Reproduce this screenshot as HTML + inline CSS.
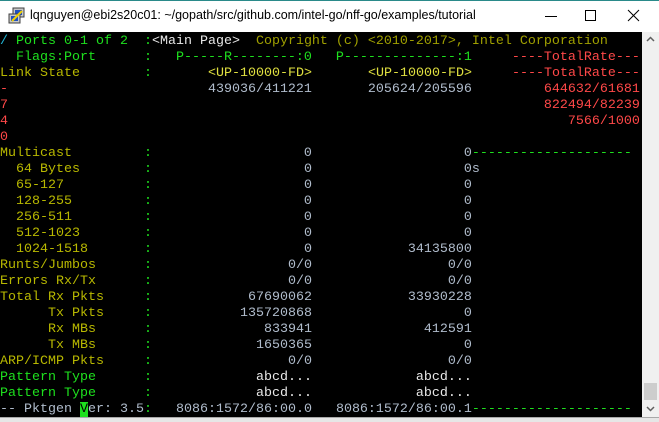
<!DOCTYPE html>
<html><head><style>
*{margin:0;padding:0}
body{width:659px;height:421px;overflow:hidden;background:#fff;position:relative;font-family:"Liberation Sans",sans-serif}
#tb{position:absolute;left:0;top:0;width:659px;height:32px;background:#fff;border-top:1px solid #2a8a8a;box-sizing:border-box}
#title{position:absolute;left:30px;top:7px;font-size:12.5px;color:#000;white-space:nowrap}
#term{position:absolute;left:0;top:32px;width:642px;height:385px;background:#000;overflow:hidden}
#in{position:absolute;left:0;top:2px;width:642px;height:385px}
.r{position:absolute;left:0;height:16px;line-height:16px;white-space:pre;font-family:"Liberation Mono",monospace;font-size:13.333px;color:#c0c0c0}
.g{color:#1ee01e}.o{color:#b8b800}.d{color:#a0a000}.w{color:#e8e8e8}.n{color:#b0bccc}.rd{color:#ff4848}.c{color:#22b8d8}.y{color:#e0e040}
#sb{position:absolute;left:642px;top:32px;width:17px;height:385px;background:#f0f0f0}
#thumb{position:absolute;left:2px;top:351px;width:13px;height:17px;background:#cdcdcd}
#bot{position:absolute;left:0;top:417px;width:659px;height:4px;background:#e6e6e6;border-top:1px solid #a8a8a8}
</style></head><body>
<div id="tb">
<svg style="position:absolute;left:8px;top:6px" width="18" height="18" viewBox="0 0 18 18"><rect x="5" y="1" width="11" height="9" fill="#c8c8c8" stroke="#404040"/><rect x="7" y="3" width="7" height="5" fill="#2050c0"/><rect x="1" y="7" width="11" height="9" fill="#c8c8c8" stroke="#404040"/><rect x="3" y="9" width="7" height="5" fill="#2050c0"/><path d="M4 14 L14 4" stroke="#f0d000" stroke-width="2"/></svg>
<div id="title">lqnguyen@ebi2s20c01: ~/gopath/src/github.com/intel-go/nff-go/examples/tutorial</div>
<svg style="position:absolute;left:544px;top:8px" width="14" height="14"><path d="M1 7.5H13" stroke="#000"/></svg>
<svg style="position:absolute;left:584px;top:8px" width="14" height="14"><rect x="1.5" y="1.5" width="10" height="10" fill="none" stroke="#000"/></svg>
<svg style="position:absolute;left:627px;top:8px" width="14" height="14"><path d="M1 1L12 12M12 1L1 12" stroke="#000"/></svg>
</div>
<div id="term"><div id="in">
<div class="r" style="top:0"><span class="c">/</span><span class="g"> Ports 0-1 of 2  :</span><span class="w">&lt;Main Page&gt;</span><span class="d">  Copyright (c) &lt;2010-2017&gt;, Intel Corporation</span></div>
<div class="r g" style="top:16px">  Flags:Port      :   P-----R--------:0   P--------------:1     <span class="rd">----TotalRate---</span></div>
<div class="r" style="top:32px"><span class="o">Link State</span>        <span class="g">:</span>       <span class="y">&lt;UP-10000-FD&gt;</span>       <span class="y">&lt;UP-10000-FD&gt;</span>     <span class="rd">----TotalRate---</span></div>
<div class="r n" style="top:48px"><span class="rd">-</span>                         439036/411221       205624/205596         <span class="rd">644632/61681</span></div>
<div class="r n" style="top:64px"><span class="rd">7</span>                                                                   <span class="rd">822494/82239</span></div>
<div class="r n" style="top:80px"><span class="rd">4</span>                                                                      <span class="rd">7566/1000</span></div>
<div class="r n" style="top:96px"><span class="rd">0</span></div>
<div class="r n" style="top:112px"><span class="o">Multicast</span>         <span class="g">:</span>                   0                   0<span class="g">--------------------</span></div>
<div class="r n" style="top:128px"><span class="o">  64 Bytes</span>        <span class="g">:</span>                   0                   0s</div>
<div class="r n" style="top:144px"><span class="o">  65-127</span>          <span class="g">:</span>                   0                   0</div>
<div class="r n" style="top:160px"><span class="o">  128-255</span>         <span class="g">:</span>                   0                   0</div>
<div class="r n" style="top:176px"><span class="o">  256-511</span>         <span class="g">:</span>                   0                   0</div>
<div class="r n" style="top:192px"><span class="o">  512-1023</span>        <span class="g">:</span>                   0                   0</div>
<div class="r n" style="top:208px"><span class="o">  1024-1518</span>       <span class="g">:</span>                   0            34135800</div>
<div class="r n" style="top:224px"><span class="o">Runts/Jumbos</span>      <span class="g">:</span>                 0/0                 0/0</div>
<div class="r n" style="top:240px"><span class="o">Errors Rx/Tx</span>      <span class="g">:</span>                 0/0                 0/0</div>
<div class="r n" style="top:256px"><span class="o">Total Rx Pkts</span>     <span class="g">:</span>            67690062            33930228</div>
<div class="r n" style="top:272px"><span class="o">      Tx Pkts</span>     <span class="g">:</span>           135720868                   0</div>
<div class="r n" style="top:288px"><span class="o">      Rx MBs</span>      <span class="g">:</span>              833941              412591</div>
<div class="r n" style="top:304px"><span class="o">      Tx MBs</span>      <span class="g">:</span>             1650365                   0</div>
<div class="r n" style="top:320px"><span class="o">ARP/ICMP Pkts</span>     <span class="g">:</span>                 0/0                 0/0</div>
<div class="r w" style="top:336px"><span class="g">Pattern Type</span>      <span class="g">:</span>             abcd...             abcd...</div>
<div class="r w" style="top:352px"><span class="g">Pattern Type</span>      <span class="g">:</span>             abcd...             abcd...</div>
<div class="r n" style="top:368px">-- Pktgen <span style="background:#1ee01e;color:#000">V</span>er: 3.5<span class="g">:</span>   8086:1572/86:00.0   8086:1572/86:00.1<span class="g">--------------------</span></div>
</div></div>
<div id="sb">
<svg style="position:absolute;left:4px;top:4px" width="9" height="6"><path d="M1 5L4.5 1.5L8 5" stroke="#606060" stroke-width="1.5" fill="none"/></svg>
<div id="thumb"></div>
<svg style="position:absolute;left:4px;top:374px" width="9" height="6"><path d="M1 1L4.5 4.5L8 1" stroke="#606060" stroke-width="1.5" fill="none"/></svg>
</div>
<div id="bot"></div>
</body></html>
